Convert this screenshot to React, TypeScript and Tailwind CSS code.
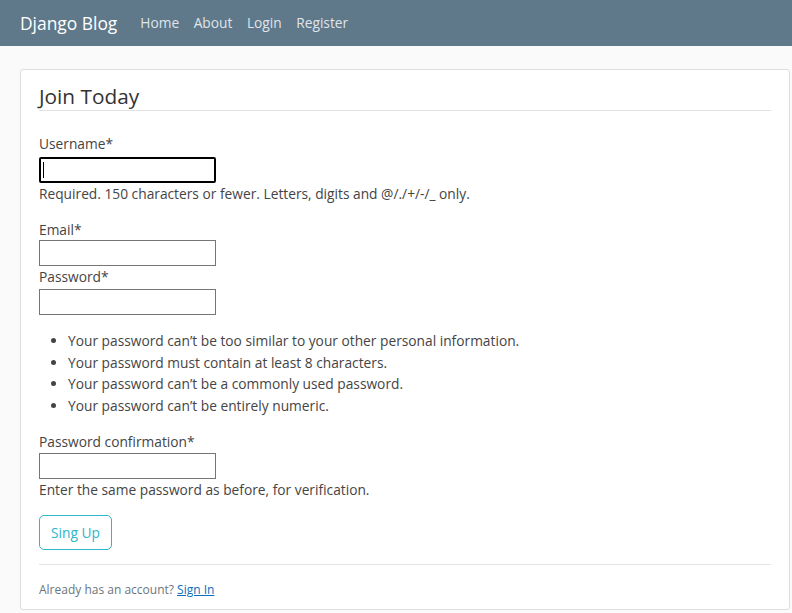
import React from 'react';

const font = { fontFamily: '"Open Sans", "Noto Sans", sans-serif' };

const TextInput: React.FC<{ focused?: boolean; className?: string }> = ({ focused, className = '' }) =>
  focused ? (
    <div className={`relative h-[26px] w-[177px] rounded-[2px] border-2 border-black bg-white ${className}`}>
      <span className="absolute left-[2px] top-[3px] h-[16px] w-px bg-black" />
    </div>
  ) : (
    <div className={`h-[26px] w-[177px] border border-[#767676] bg-white ${className}`} />
  );

const App: React.FC = () => {
  const rules = [
    'Your password can’t be too similar to your other personal information.',
    'Your password must contain at least 8 characters.',
    'Your password can’t be a commonly used password.',
    'Your password can’t be entirely numeric.',
  ];

  return (
    <div className="min-h-[613px] bg-[#fafafa] text-[13.75px] text-[#444444]" style={font}>
      {/* Navbar */}
      <nav className="flex h-[46px] items-center bg-[#5f788a] px-[20px]">
        <span className="mr-[23px] text-[17.4px] text-white">Django Blog</span>
        <div className="flex gap-[14.5px] text-[13.75px] text-[#dfe5ea]">
          <span>Home</span>
          <span>About</span>
          <span>Login</span>
          <span>Register</span>
        </div>
      </nav>

      {/* Register card */}
      <div className="ml-[20px] mt-[23px] w-[770px] rounded-[3px] border border-[#dddddd] bg-white px-[18px] pb-[11px] pt-[9px]">
        <div className="mb-[22px] h-[32px] border-b border-[#e2e2e2] text-[20.8px] leading-[34px] text-[#333]">Join Today</div>

        <div className="h-[22px] leading-[22px]">Username*</div>
        <TextInput focused className="mt-[2px]" />
        <div className="leading-[22px]">Required. 150 characters or fewer. Letters, digits and @/./+/-/_ only.</div>

        <div className="mt-[14px] h-[22px] leading-[22px]">Email*</div>
        <TextInput className="-mt-[1px]" />

        <div className="h-[22px] leading-[22px]">Password*</div>
        <TextInput className="mt-[1px]" />

        <ul className="mt-[15px] list-disc pl-[29px]">
          {rules.map((rule, i) => (
            <li key={i} className="leading-[21.6px]">{rule}</li>
          ))}
        </ul>

        <div className="mt-[15px] h-[22px] leading-[22px]">Password confirmation*</div>
        <TextInput />
        <div className="leading-[22px]">Enter the same password as before, for verification.</div>

        <button className="mt-[14px] h-[35px] rounded-[5px] border border-[#2cb7ca] px-[11px] text-[13.75px] text-[#2cb7ca]">
          Sing Up
        </button>

        <div className="mt-[14px] border-t border-[#e2e2e2] pt-[16px]">
          <div className="text-[12px] leading-[17px] text-[#6c757d]">
            Already has an account? <a className="text-[#0a6ebd] underline">Sign In</a>
          </div>
        </div>
      </div>
    </div>
  );
};

export default App;
